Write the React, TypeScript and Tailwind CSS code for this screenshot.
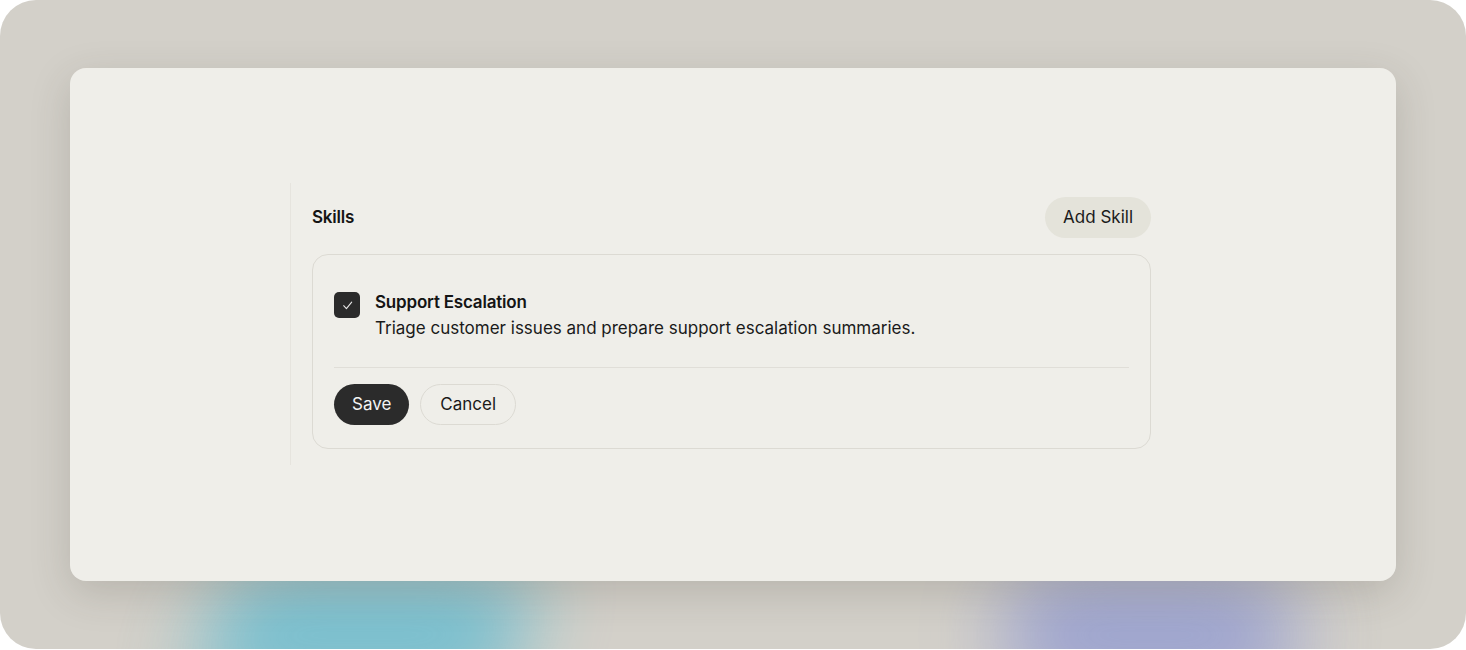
import React from 'react';

const font = { fontFamily: 'Inter, "Noto Sans", sans-serif' };

export default function App() {
  return (
    <div className="w-[1466px] h-[650px] bg-white" style={font}>
      <div className="relative w-full h-[649px] rounded-[36px] bg-[#d3d0c9] overflow-hidden px-[70px] pt-[68px]">
        <div className="absolute left-[200px] top-[570px] w-[330px] h-[130px] rounded-full bg-[#5fbad0] opacity-80 blur-[40px] -skew-x-12" />
        <div className="absolute left-[1000px] top-[570px] w-[300px] h-[130px] rounded-full bg-[#8f98d0] opacity-80 blur-[40px]" />

        <div className="relative h-[513px] rounded-[16px] bg-[#efeee9] shadow-[0_12px_40px_rgba(60,55,45,0.18)] flex pl-[220px] pt-[115px]">
          <div className="w-[882px] h-[282px] border-l border-[#e6e4de] px-[21px] pt-[14px]">
            <div className="flex items-center justify-between h-[41px]">
              <span className="text-[17px] font-semibold text-[#141414] tracking-[-0.2px]">Skills</span>
              <button className="h-[41px] px-[18px] rounded-full bg-[#e4e3da] text-[17px] text-[#1a1a1a]">Add Skill</button>
            </div>
            <div className="mt-[16px] h-[195px] rounded-[16px] border border-[#dcdad3] px-[21px] pt-[34px]">
              <div className="flex gap-[15px]">
                <div className="mt-[3px] w-[26px] h-[26px] rounded-[5px] bg-[#2b2b2b] flex items-center justify-center">
                  <svg width="11" height="11" viewBox="0 0 10 10" fill="none">
                    <path d="M1.5 5.2 L4 7.8 L8.8 2" stroke="#e8e8e8" strokeWidth="1" strokeLinecap="round" strokeLinejoin="round" />
                  </svg>
                </div>
                <div className="flex flex-col">
                  <span className="text-[17px] leading-[26px] font-semibold text-[#141414] tracking-[-0.2px]">Support Escalation</span>
                  <span className="text-[17px] leading-[26px] text-[#1a1a1a]">Triage customer issues and prepare support escalation summaries.</span>
                </div>
              </div>
              <div className="mt-[26px] border-t border-[#e0ded8]" />
              <div className="mt-[16px] flex gap-[11px]">
                <button className="h-[41px] px-[18px] rounded-full bg-[#2b2b2b] text-[17px] text-[#f4f4f4]">Save</button>
                <button className="h-[41px] px-[19px] rounded-full border border-[#dcdad3] text-[17px] text-[#1a1a1a]">Cancel</button>
              </div>
            </div>
          </div>
        </div>
      </div>
    </div>
  );
}
